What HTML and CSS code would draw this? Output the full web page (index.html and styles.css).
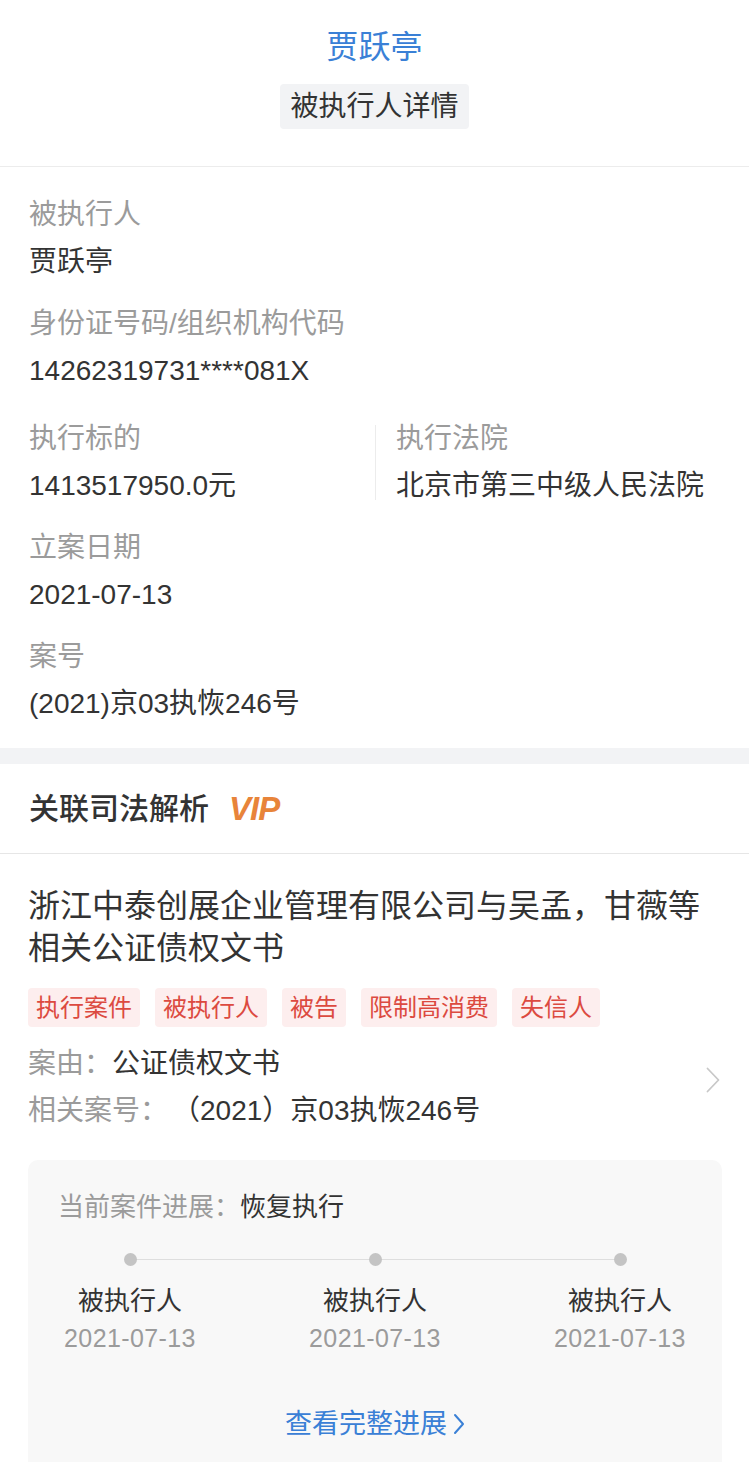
FILE: index.html
```html
<!DOCTYPE html>
<html lang="zh-CN">
<head>
<meta charset="utf-8">
<title>被执行人详情</title>
<link rel="stylesheet" href="styles.css">
</head>
<body>
<div class="page">
  <header class="hero">
    <h1 class="hero-name">贾跃亭</h1>
    <span class="hero-tag">被执行人详情</span>
  </header>

  <section class="info">
    <div class="field">
      <div class="label">被执行人</div>
      <div class="value">贾跃亭</div>
    </div>
    <div class="field">
      <div class="label">身份证号码/组织机构代码</div>
      <div class="value">14262319731****081X</div>
    </div>
    <div class="field-row">
      <div class="field">
        <div class="label">执行标的</div>
        <div class="value">1413517950.0元</div>
      </div>
      <div class="field field-right">
        <div class="label">执行法院</div>
        <div class="value">北京市第三中级人民法院</div>
      </div>
    </div>
    <div class="field">
      <div class="label">立案日期</div>
      <div class="value">2021-07-13</div>
    </div>
    <div class="field">
      <div class="label">案号</div>
      <div class="value">(2021)京03执恢246号</div>
    </div>
  </section>

  <div class="band"></div>

  <section class="related">
    <div class="related-head">
      <h2 class="related-title">关联司法解析</h2>
      <span class="vip">VIP</span>
    </div>

    <div class="case">
      <h3 class="case-title">浙江中泰创展企业管理有限公司与吴孟，甘薇等相关公证债权文书</h3>
      <div class="tags">
        <span class="tag">执行案件</span>
        <span class="tag">被执行人</span>
        <span class="tag">被告</span>
        <span class="tag">限制高消费</span>
        <span class="tag">失信人</span>
      </div>
      <div class="meta">
        <div class="meta-rows">
          <div class="meta-row"><span class="meta-label">案由：</span><span class="meta-value">公证债权文书</span></div>
          <div class="meta-row"><span class="meta-label">相关案号：</span><span class="meta-value meta-value-gap">（2021）京03执恢246号</span></div>
        </div>
        <svg class="meta-arrow" width="14" height="26" viewBox="0 0 14 26"><polyline points="1.5,1.5 12.5,13 1.5,24.5" fill="none" stroke="#c8c8c8" stroke-width="1.8" stroke-linecap="round" stroke-linejoin="round"/></svg>
      </div>

      <div class="progress">
        <div class="progress-now"><span class="meta-label">当前案件进展：</span><span class="progress-state">恢复执行</span></div>
        <div class="timeline">
          <div class="step">
            <span class="dot"></span>
            <div class="step-name">被执行人</div>
            <div class="step-date">2021-07-13</div>
          </div>
          <div class="step">
            <span class="dot"></span>
            <div class="step-name">被执行人</div>
            <div class="step-date">2021-07-13</div>
          </div>
          <div class="step">
            <span class="dot"></span>
            <div class="step-name">被执行人</div>
            <div class="step-date">2021-07-13</div>
          </div>
        </div>
        <div class="more">
          <span class="more-link">查看完整进展<svg class="more-arrow" width="12" height="22" viewBox="0 0 12 22"><polyline points="2,2 10,11 2,20" fill="none" stroke="#3a80d6" stroke-width="2" stroke-linecap="round" stroke-linejoin="round"/></svg></span>
        </div>
      </div>
    </div>
  </section>
</div>
</body>
</html>
```

FILE: styles.css
```css
* { box-sizing: border-box; }

html, body {
  margin: 0;
  padding: 0;
  background: #ffffff;
}

body {
  font-family: "Liberation Sans", "Noto Sans CJK SC", sans-serif;
  color: #333333;
}

.page {
  width: 749px;
}

/* header */
.hero {
  display: flex;
  flex-direction: column;
  align-items: center;
  padding: 25px 0 37px;
  border-bottom: 1px solid #ececec;
}

.hero-name {
  margin: 0;
  font-size: 32px;
  line-height: 44px;
  font-weight: 400;
  color: #3a80d6;
}

.hero-tag {
  margin-top: 15px;
  height: 45px;
  line-height: 45px;
  padding: 0 10px;
  font-size: 28px;
  color: #333333;
  background: #f2f3f5;
  border-radius: 4px;
}

/* info */
.info {
  display: flex;
  flex-direction: column;
  gap: 22px;
  padding: 28px 29px 24px;
}

.field {
  display: flex;
  flex-direction: column;
  gap: 7px;
}

.label {
  font-size: 28px;
  line-height: 40px;
  color: #9b9b9b;
}

.value {
  font-size: 28px;
  line-height: 40px;
  color: #333333;
}

.field-row {
  display: flex;
  margin-top: 6px;
}

.field-row > .field {
  flex: 0 0 346px;
}

.field-right {
  padding-left: 20px;
  border-left: 1px solid #ececec;
  flex: 1 1 auto !important;
}

.field-row .field-right {
  margin: 6px 0;
}

.field-row .field-right .label {
  margin-top: -6px;
}

.field-row .field-right .value {
  margin-bottom: -6px;
}

.band {
  height: 16px;
  background: #f2f3f5;
}

/* related */
.related-head {
  display: flex;
  align-items: center;
  gap: 20px;
  height: 90px;
  padding: 0 29px;
  border-bottom: 1px solid #e6e6e6;
}

.related-title {
  margin: 0;
  font-size: 30px;
  line-height: 40px;
  font-weight: 500;
  color: #333333;
}

.vip {
  font-family: "Liberation Sans", sans-serif;
  font-style: italic;
  font-weight: 700;
  font-size: 33px;
  line-height: 40px;
  letter-spacing: -1px;
  color: #e8843a;
}

.case {
  padding: 0 27px 30px 28px;
}

.case-title {
  margin: 31px 0 0;
  font-size: 32px;
  line-height: 42px;
  font-weight: 400;
  color: #333333;
  width: 680px;
}

.tags {
  display: flex;
  gap: 15px;
  margin-top: 19px;
}

.tag {
  height: 39px;
  line-height: 39px;
  padding: 0 8px;
  font-size: 24px;
  color: #dc4a40;
  background: #fdeeee;
  border-radius: 4px;
}

.meta {
  display: flex;
  align-items: center;
  justify-content: space-between;
  margin-top: 13px;
}

.meta-row {
  font-size: 28px;
  line-height: 47px;
}

.meta-label {
  color: #9b9b9b;
}

.meta-value {
  color: #333333;
}

.meta-value-gap {
  margin-left: 18px;
}

.meta-arrow {
  margin-right: 2px;
  margin-top: -14px;
}

/* progress card */
.progress {
  margin-top: 26px;
  background: #f8f8f8;
  border-radius: 10px;
  padding: 27px 30px 30px;
}

.progress-now {
  font-size: 26px;
  line-height: 40px;
}

.progress-state {
  color: #333333;
}

.timeline {
  position: relative;
  display: flex;
  justify-content: space-between;
  margin-top: 26px;
}

.timeline::before {
  content: "";
  position: absolute;
  top: 6px;
  left: 72px;
  right: 72px;
  height: 1px;
  background: #dedede;
}

.step {
  width: 144px;
  display: flex;
  flex-direction: column;
  align-items: center;
  position: relative;
}

.dot {
  width: 13px;
  height: 13px;
  border-radius: 50%;
  background: #c4c4c4;
}

.step-name {
  margin-top: 17px;
  font-size: 26px;
  line-height: 36px;
  color: #333333;
}

.step-date {
  margin-top: 1px;
  font-size: 25px;
  line-height: 36px;
  letter-spacing: 0.4px;
  color: #9b9b9b;
}

.more {
  display: flex;
  justify-content: center;
  margin-top: 48px;
}

.more-link {
  display: flex;
  align-items: center;
  gap: 6px;
  font-size: 27px;
  line-height: 40px;
  color: #3a80d6;
}
```
